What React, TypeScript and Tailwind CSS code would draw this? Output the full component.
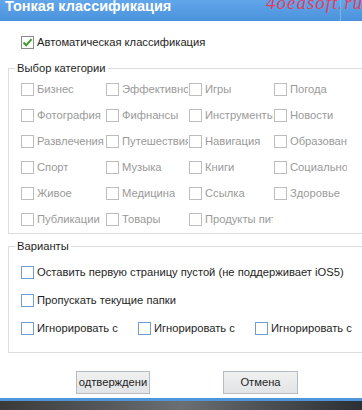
import React from "react";

const font = { fontFamily: '"Liberation Sans", Arial, sans-serif' };

function Box({ checked = false, tone = "gray" }: { checked?: boolean; tone?: "gray" | "blue" | "dark" }) {
  const border =
    tone === "gray" ? "border-[#bdbdbd]" : tone === "blue" ? "border-[#6f9fd0]" : "border-[#8a8a8a]";
  return (
    <span className={`relative inline-block w-[13px] h-[13px] shrink-0 border bg-white ${border}`}>
      {checked && (
        <svg className="absolute left-[0px] top-[0px]" width="11" height="11" viewBox="0 0 11 11">
          <path d="M1.5 5.5 L4.2 8.3 L9.6 2.2" fill="none" stroke="#3f9a2c" strokeWidth="2" />
        </svg>
      )}
    </span>
  );
}

const cats = [
  ["Бизнес", "Эффективность", "Игры", "Погода"],
  ["Фотография", "Фифнансы", "Инструменты", "Новости"],
  ["Развлечения", "Путешествия", "Навигация", "Образование"],
  ["Спорт", "Музыка", "Книги", "Социальное"],
  ["Живое", "Медицина", "Ссылка", "Здоровье"],
  ["Публикации", "Товары", "Продукты питания", ""],
];

export default function App() {
  return (
    <div className="relative w-[362px] h-[410px] overflow-hidden bg-white text-[11.2px]" style={font}>
      {/* title bar */}
      <div className="relative h-[21px] bg-gradient-to-b from-[#62a6ea] to-[#4a92dc] overflow-hidden">
        <div className="absolute left-[5px] top-[-4px] text-white font-bold text-[14.5px] leading-[20px] whitespace-nowrap">
          Тонкая классификация
        </div>
        <div
          className="absolute left-[266px] top-[-8px] text-[#e2405e] italic text-[19px] leading-[22px] whitespace-nowrap tracking-[1px]"
          style={{ fontFamily: '"Liberation Serif", serif' }}
        >
          4oeasoft.ru
        </div>
        <div className="absolute left-[340px] top-[0px] w-[1px] h-[21px] bg-[#7fb4ea]" />
      </div>

      {/* body */}
      <div className="flex h-[379px]">
        <div className="w-[4px] bg-gradient-to-r from-[#5aa0e2] to-[#4b90d6]" />
        <div className="flex-1 flex flex-col bg-white pl-[8px] pr-[4px]">
          {/* auto classification */}
          <div className="flex items-center gap-[3px] pl-[13px] mt-[15px] h-[13px]">
            <Box checked tone="dark" />
            <span className="text-[#1e1e1e] leading-none">Автоматическая классификация</span>
          </div>

          {/* categories group */}
          <div className="relative mt-[19px] h-[166px] border border-[#dcdcdc]">
            <span className="absolute left-[6px] top-[-9px] bg-white px-[2px] text-[#1e1e1e] leading-[16px]">
              Выбор категории
            </span>
            <div className="grid grid-cols-[85px_83px_85px_74px] gap-y-[13px] pl-[12px] pt-[14px]">
              {cats.flat().map((c, i) =>
                c ? (
                  <div key={i} className="flex items-center gap-[3px] h-[13px] overflow-hidden pr-[1px]">
                    <Box tone="gray" />
                    <span className="text-[#9a9a9a] whitespace-nowrap overflow-hidden leading-none">{c}</span>
                  </div>
                ) : (
                  <div key={i} />
                )
              )}
            </div>
          </div>

          {/* options group */}
          <div className="relative mt-[12px] h-[107px] border border-[#dcdcdc]">
            <span className="absolute left-[6px] top-[-9px] bg-white px-[2px] text-[#1e1e1e] leading-[16px]">
              Варианты
            </span>
            <div className="flex flex-col gap-[15px] pl-[12px] pt-[19px]">
              <div className="flex items-center gap-[3px] h-[13px]">
                <Box tone="blue" />
                <span className="text-[#1e1e1e] whitespace-nowrap leading-none">
                  Оставить первую страницу пустой (не поддерживает iOS5)
                </span>
              </div>
              <div className="flex items-center gap-[3px] h-[13px]">
                <Box tone="blue" />
                <span className="text-[#1e1e1e] whitespace-nowrap leading-none">Пропускать текущие папки</span>
              </div>
              <div className="flex h-[13px]">
                {["Игнорировать с", "Игнорировать с", "Игнорировать с"].map((t, i) => (
                  <div key={i} className="flex items-center gap-[3px] w-[117px] overflow-hidden">
                    <Box tone="blue" />
                    <span className="text-[#1e1e1e] whitespace-nowrap leading-none">{t}</span>
                  </div>
                ))}
              </div>
            </div>
          </div>

          {/* buttons */}
          <div className="flex mt-[18px] pl-[68px] gap-[73px]">
            <button className="w-[74px] h-[23px] border border-[#b5bcc4] bg-gradient-to-b from-[#f0f0f0] to-[#e2e4e6] text-[#1e1e1e] overflow-hidden whitespace-nowrap flex items-center justify-center">
              одтверждени
            </button>
            <button className="w-[75px] h-[23px] border border-[#b5bcc4] bg-gradient-to-b from-[#f0f0f0] to-[#e2e4e6] text-[#1e1e1e] flex items-center justify-center">
              Отмена
            </button>
          </div>
        </div>
      </div>
      {/* bottom frame */}
      <div className="absolute left-0 top-[398px] w-[362px] h-[3px] bg-[#4f95da]" />
      <div className="absolute left-0 top-[401px] w-[362px] h-[9px] bg-gradient-to-r from-[#3a3a3a] via-[#6b6f72] to-[#2c2f33]" />
    </div>
  );
}
